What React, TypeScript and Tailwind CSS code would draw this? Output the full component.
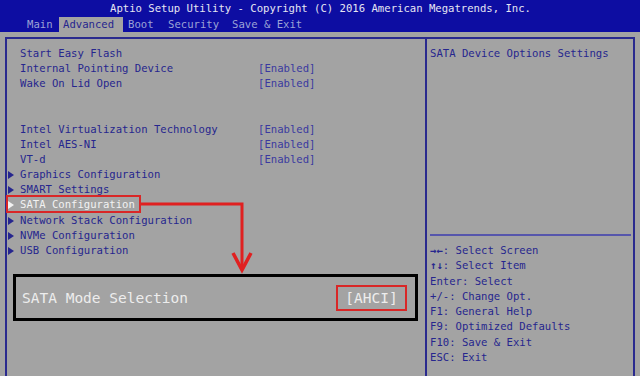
import React from 'react';

const rows: { label: string; value?: string; sub?: boolean; selected?: boolean }[] = [
  { label: 'Start Easy Flash' },
  { label: 'Internal Pointing Device', value: '[Enabled]' },
  { label: 'Wake On Lid Open', value: '[Enabled]' },
  { label: '' },
  { label: '' },
  { label: 'Intel Virtualization Technology', value: '[Enabled]' },
  { label: 'Intel AES-NI', value: '[Enabled]' },
  { label: 'VT-d', value: '[Enabled]' },
  { label: 'Graphics Configuration', sub: true },
  { label: 'SMART Settings', sub: true },
  { label: 'SATA Configuration', sub: true, selected: true },
  { label: 'Network Stack Configuration', sub: true },
  { label: 'NVMe Configuration', sub: true },
  { label: 'USB Configuration', sub: true },
];

const help = [
  ['→←', ': Select Screen'],
  ['↑↓', ': Select Item'],
  ['', 'Enter: Select'],
  ['', '+/-: Change Opt.'],
  ['', 'F1: General Help'],
  ['', 'F9: Optimized Defaults'],
  ['', 'F10: Save & Exit'],
  ['', 'ESC: Exit'],
];

function Triangle({ white }: { white?: boolean }) {
  return (
    <svg width="6" height="8" viewBox="0 0 6 8" className="mt-[1px]">
      <path d="M0 0 L6 4 L0 8 Z" fill={white ? '#f2f2f2' : '#26268e'} />
    </svg>
  );
}

export default function App() {
  return (
    <div className="relative w-[640px] h-[376px] overflow-hidden bg-[#a3a3a3] font-['DejaVu_Sans_Mono',monospace] text-[10.6px] text-[#26268e]">
      {/* header */}
      <div className="h-[32px] bg-[#0d0da2]">
        <div className="pl-[110px] h-[16px] leading-[16px] text-[#e6e6f2]">
          Aptio Setup Utility - Copyright (C) 2016 American Megatrends, Inc.
        </div>
        <div className="flex h-[16px] items-center pl-[27px] leading-[15px] text-[#9ca3d6]">
          <span className="w-[32px]">Main</span>
          <span className="w-[64px] h-[15px] bg-[#a3a3a3] pl-[4px] text-[#26268e]">Advanced</span>
          <span className="ml-[5px] w-[40px]">Boot</span>
          <span className="w-[64px]">Security</span>
          <span>Save &amp; Exit</span>
        </div>
      </div>

      {/* frame */}
      <div className="mt-[5px] ml-[5px] w-[630px] h-[345px] border-2 border-b-0 border-[#2a2a8e] flex">
        <div className="w-[418px] pt-[7px]">
          {rows.map((r, i) => (
            <div key={i} className={`relative flex h-[15.15px] leading-[15.15px] ${r.selected ? 'text-[#f2f2f2]' : ''}`}>
              <div className="w-[13px] pl-[1px] flex items-center">{r.sub && <Triangle white={r.selected} />}</div>
              <span className="w-[238px]">{r.label}</span>
              {r.value && <span className="text-[#3a3aa0]">{r.value}</span>}
              {r.selected && (
                <span className="absolute left-[-1px] top-[-2px] w-[135px] h-[18px] border-2 border-[#d92727]" />
              )}
            </div>
          ))}
          <div className="mt-[16px] ml-[6px] w-[405px] h-[47px] border-[3px] border-black flex items-center justify-between pl-[6px] pr-[8px] pt-[2px] text-[14.5px] text-[#ededed]">
            <span>SATA Mode Selection</span>
            <span className="w-[71px] h-[26px] border-2 border-[#d92727] flex items-center justify-center">[AHCI]</span>
          </div>
        </div>

        <div className="flex-1 border-l-2 border-[#2a2a8e] flex flex-col">
          <div className="h-[195px] pt-[7px] pl-[3px] leading-[15.15px]">SATA Device Options Settings</div>
          <div className="ml-[3px] mr-[2px] h-[2px] bg-[#5656ac]" />
          <div className="pt-[7px] pl-[3px]">
            {help.map(([k, t], i) => (
              <div key={i} className="h-[15.25px] leading-[15.25px] whitespace-pre">
                {k && <span className="font-bold">{k}</span>}
                {t}
              </div>
            ))}
          </div>
        </div>
      </div>

      {/* annotation arrow */}
      <svg className="absolute left-0 top-0" width="640" height="376" viewBox="0 0 640 376" fill="none">
        <polyline points="141,204 242,204 242,268" stroke="#e02020" strokeWidth="3" />
        <polyline points="233,253 242,270 251,253" stroke="#e02020" strokeWidth="3.5" strokeLinejoin="miter" />
      </svg>
    </div>
  );
}
